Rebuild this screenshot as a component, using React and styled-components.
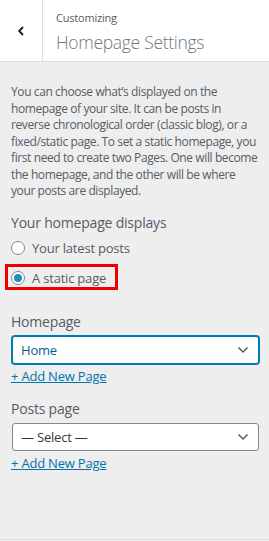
import React from 'react';
import styled, { createGlobalStyle } from 'styled-components';

const GlobalStyle = createGlobalStyle`
	html, body {
		margin: 0;
		padding: 0;
		background: #eee;
	}
	body {
		font-family: "Open Sans", "Noto Sans", Arial, sans-serif;
		color: #555d66;
		letter-spacing: -0.2px;
	}
`;

const Panel = styled.div`
	width: 269px;
	min-height: 540px;
	background: #eee;
	border-bottom: 1px solid #ddd;
	box-sizing: border-box;
`;

const Header = styled.div`
	display: flex;
	height: 62px;
	background: #fff;
	border-bottom: 1px solid #ddd;
	box-sizing: border-box;
`;

const BackButton = styled.button`
	width: 43px;
	border: 0;
	border-right: 1px solid #ddd;
	background: #fff;
	display: flex;
	align-items: center;
	justify-content: center;
	padding: 0;
	color: #23282d;
	cursor: pointer;
`;

const TitleBlock = styled.div`
	display: flex;
	flex-direction: column;
	padding: 10px 0 0 13px;
`;

const Eyebrow = styled.span`
	font-size: 11px;
	line-height: 16px;
	color: #555d66;
`;

const Title = styled.h3`
	margin: 4px 0 0;
	font-size: 17.5px;
	line-height: 24px;
	font-weight: 300;
	letter-spacing: -0.3px;
	color: #6c7781;
`;

const Body = styled.div`
	padding: 22px 10px 0 11px;
`;

const Description = styled.p`
	margin: 0;
	font-size: 12px;
	line-height: 16.5px;
	letter-spacing: -0.4px;
	color: #555d66;
`;

const Section = styled.div`
	margin-top: ${p => p.gap || 0}px;
`;

const ControlTitle = styled.div`
	font-size: 14px;
	line-height: 20px;
	color: #555d66;
`;

const RadioList = styled.div`
	display: flex;
	flex-direction: column;
	gap: 10px;
	margin-top: 5px;
`;

const RadioRow = styled.label`
	position: relative;
	align-self: flex-start;
	display: inline-flex;
	align-items: center;
	gap: 7px;
	height: 20px;
	font-size: 13px;
	color: #555d66;

	${p => p.highlight && `
		&::after {
			content: '';
			position: absolute;
			left: -6px;
			right: -12px;
			top: -4px;
			bottom: -2px;
			border: 3px solid #ee0000;
			pointer-events: none;
		}
	`}
`;

const RadioCircle = styled.span`
	width: 14px;
	height: 14px;
	border-radius: 50%;
	border: 1px solid #7e8993;
	background: #fff;
	box-sizing: border-box;
	display: flex;
	align-items: center;
	justify-content: center;

	&::before {
		content: '';
		width: 8px;
		height: 8px;
		border-radius: 50%;
		background: ${p => (p.checked ? '#1e8cbe' : 'transparent')};
	}
`;

const SelectBox = styled.div`
	margin: 4px 0 0 1px;
	height: 28px;
	display: flex;
	align-items: center;
	justify-content: space-between;
	padding: 0 9px 0 8px;
	background: #fff;
	border-radius: 3px;
	box-sizing: border-box;
	font-size: 13px;
	border: 1px solid ${p => (p.focused ? '#007cba' : '#7e8993')};
	box-shadow: ${p => (p.focused ? '0 0 0 1px #007cba' : 'none')};
	color: ${p => (p.focused ? '#016087' : '#32373c')};
`;

const AddLink = styled.a`
	display: inline-block;
	margin-top: 3px;
	font-size: 13px;
	line-height: 18px;
	color: #0073aa;
	text-decoration: underline;
`;

const Chevron = () => (
	<svg width="12" height="8" viewBox="0 0 12 8" fill="none">
		<path d="M1.5 1.5 L6 6 L10.5 1.5" stroke="#555d66" strokeWidth="1.5" />
	</svg>
);

const App = () => (
	<>
		<GlobalStyle />
		<Panel>
			<Header>
				<BackButton aria-label="Back">
					<svg width="8" height="12" viewBox="0 0 8 12" fill="none">
						<path d="M6 2 L2.2 6 L6 10" stroke="#23282d" strokeWidth="2" />
					</svg>
				</BackButton>
				<TitleBlock>
					<Eyebrow>Customizing</Eyebrow>
					<Title>Homepage Settings</Title>
				</TitleBlock>
			</Header>
			<Body>
				<Description>
					You can choose what’s displayed on the homepage of your site. It can be posts in reverse chronological order (classic blog), or a fixed/static page. To set a static homepage, you first need to create two Pages. One will become the homepage, and the other will be where your posts are displayed.
				</Description>

				<Section gap={13}>
					<ControlTitle>Your homepage displays</ControlTitle>
					<RadioList>
						<RadioRow>
							<RadioCircle />
							Your latest posts
						</RadioRow>
						<RadioRow highlight>
							<RadioCircle checked />
							A static page
						</RadioRow>
					</RadioList>
				</Section>

				<Section gap={24}>
					<ControlTitle>Homepage</ControlTitle>
					<SelectBox focused>
						<span>Home</span>
						<Chevron />
					</SelectBox>
					<AddLink href="#">+ Add New Page</AddLink>
				</Section>

				<Section gap={13}>
					<ControlTitle>Posts page</ControlTitle>
					<SelectBox>
						<span>— Select —</span>
						<Chevron />
					</SelectBox>
					<AddLink href="#">+ Add New Page</AddLink>
				</Section>
			</Body>
		</Panel>
	</>
);

export default App;
